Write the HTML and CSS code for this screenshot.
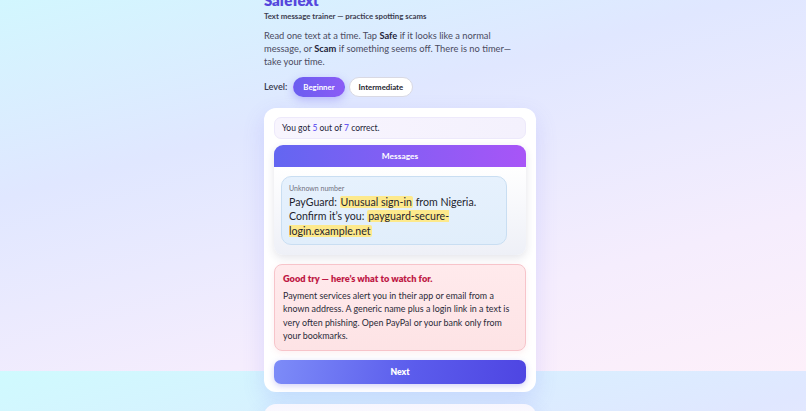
FILE: index.html
```html
<!DOCTYPE html>
<html lang="en">
  <head>
    <meta charset="UTF-8" />
    <meta name="viewport" content="width=device-width, initial-scale=1.0" />
    <title>SafeText</title>

    <link rel="stylesheet" href="styles.css">
  </head>
  <body>
    <div class="wrapper">
      <header class="intro">
        <h1 class="title">SafeText</h1>
        <p class="tagline">Text message trainer — practice spotting scams</p>
        <p class="lede">
          Read one text at a time. Tap <strong>Safe</strong> if it looks like a
          normal message, or <strong>Scam</strong> if something seems off.
          There is no timer—take your time.
        </p>
        <div class="level">
          <span class="level__label">Level:</span>
          <button class="pill" data-active="true">Beginner</button>
          <button class="pill">Intermediate</button>
        </div>
      </header>

      <main class="card">
        <p class="score">You got <b>5</b> out of <b>7</b> correct.</p>

        <section class="phone">
          <h2 class="phone__bar">Messages</h2>
          <div class="phone__body">
            <div class="bubble">
              <p class="bubble__from">Unknown number</p>
              <p class="bubble__text">
                PayGuard: <mark>Unusual sign-in</mark> from Nigeria. Confirm
                it’s you: <mark>payguard-secure-login.example.net</mark>
              </p>
            </div>
          </div>
        </section>

        <div class="feedback">
          <p class="feedback__title">Good try — here’s what to watch for.</p>
          <p>
            Payment services alert you in their app or email from a known
            address. A generic name plus a login link in a text is very often
            phishing. Open PayPal or your bank only from your bookmarks.
          </p>
        </div>

        <button class="next">Next</button>
      </main>

      <section class="card card--tips">
        <h2 class="tips__title">Quick checks</h2>
        <ul class="tips">
          <li>Does the link match the real company website?</li>
          <li>Is the message rushing you to act right now?</li>
          <li>Is it asking for a code, password or payment?</li>
          <li>Would the sender normally contact you this way?</li>
        </ul>
      </section>
    </div>

    <script src="script.js"></script>
  </body>
</html>
```

FILE: styles.css
```css
:root {
  --clr-ink: #24243a;
  --clr-muted: #4a4a5e;
  --clr-violet: #6a5af0;
  --clr-indigo: #5546dc;
}

* {
  margin: 0;
  box-sizing: border-box;
}

html {
  height: 100%;
}

body {
  min-height: 100%;
  font-family: Lato, "Open Sans", sans-serif;
  color: var(--clr-ink);
  background: linear-gradient(165deg, #cffafe 0%, #e0e7ff 38%, #f5edfd 75%, #fdf0fa 100%);
  padding: 31px 6px 24px 0;
}

.wrapper {
  width: 272px;
  margin-inline: auto;
}

.title {
  font-size: 15px;
  line-height: 1.2;
  font-weight: 800;
  color: var(--clr-indigo);
  letter-spacing: -0.02em;
}

.tagline {
  font-size: 7.8px;
  font-weight: 700;
  color: #3c3c50;
  margin-top: 2px;
}

.lede {
  max-width: 252px;
  font-size: 9.3px;
  line-height: 13.2px;
  color: var(--clr-muted);
  margin-top: 8px;
}

.lede strong {
  color: var(--clr-ink);
}

.level {
  display: flex;
  align-items: center;
  gap: 4px;
  margin-top: 8px;
}

.level__label {
  font-size: 9.2px;
  font-weight: 600;
  color: #3a3a4e;
  margin-right: 2px;
}

.pill {
  font: inherit;
  font-size: 7.8px;
  font-weight: 700;
  height: 20px;
  padding: 0 9px;
  border-radius: 999px;
  border: 1px solid #d9d9e3;
  background: #fff;
  color: #1f1f30;
  cursor: pointer;
}

.pill[data-active="true"] {
  border-color: transparent;
  color: #fff;
  background: linear-gradient(90deg, #6b5ef0, #8b5cf6);
  box-shadow: 0 3px 8px rgba(109, 94, 240, 0.35);
}

.card {
  display: flex;
  flex-direction: column;
  gap: 9px;
  margin-top: 11px;
  padding: 9px 10px 8px;
  background: #fff;
  border-radius: 12px;
  box-shadow: 0 8px 22px rgba(99, 102, 241, 0.16);
}

.score {
  font-size: 8.5px;
  line-height: 20px;
  padding: 0 7px;
  border: 1px solid #ede9fb;
  border-radius: 7px;
  background: linear-gradient(90deg, #f8f5fe, #f4f1fd);
  margin-bottom: -3px;
}

.score b {
  font-weight: 500;
  color: var(--clr-violet);
}

.phone {
  border-radius: 9px;
  overflow: hidden;
  box-shadow: 0 3px 8px rgba(40, 40, 80, 0.12);
}

.phone__bar {
  font-size: 8.4px;
  font-weight: 700;
  line-height: 22px;
  text-align: center;
  color: #fff;
  background: linear-gradient(90deg, #6366f1, #a855f7);
}

.phone__body {
  padding: 9px 7px 10px;
  background: linear-gradient(180deg, #ffffff, #eef0f7);
}

.bubble {
  width: 226px;
  padding: 6px 7px 6px;
  border: 1px solid #c9def2;
  border-radius: 10px;
  background: linear-gradient(180deg, #e6f1fd, #e1eefb);
}

.bubble__from {
  font-size: 7px;
  color: #70707e;
  line-height: 10px;
}

.bubble__text {
  font-size: 10.6px;
  line-height: 14.6px;
  color: #1f1f2e;
  margin-top: 2px;
}

mark {
  background: #fde98c;
  color: inherit;
  padding: 0 1px;
  border-radius: 2px;
}

.feedback {
  padding: 7px 8px 8px;
  font-size: 8.9px;
  line-height: 13.4px;
  color: #2a2a38;
  border: 1px solid #f7c4ca;
  border-radius: 8px;
  background: linear-gradient(180deg, #ffeaec, #fde3e5);
  box-shadow: 0 2px 6px rgba(240, 120, 140, 0.12);
}

.feedback__title {
  font-size: 9.2px;
  font-weight: 800;
  color: #be1845;
  margin-bottom: 3px;
}

.next {
  font: inherit;
  font-size: 8.6px;
  font-weight: 800;
  height: 24px;
  border: 0;
  border-radius: 7px;
  color: #fff;
  background: linear-gradient(100deg, #7d8cf8, #5b5cec 55%, #4e45e2);
  box-shadow: 0 2px 6px rgba(79, 70, 229, 0.25);
  cursor: pointer;
}

.card--tips {
  margin-top: 12px;
  gap: 6px;
  padding-top: 16px;
  background: linear-gradient(180deg, #f8f6fe, #fff 30px);
}

.tips__title {
  font-size: 10px;
  font-weight: 800;
}

.tips {
  padding-left: 14px;
  font-size: 8.6px;
  line-height: 14px;
  color: var(--clr-muted);
}
```

FILE: script.js
```js
window.scrollTo(0, 40);
window.addEventListener("load", () => window.scrollTo(0, 40));
```
